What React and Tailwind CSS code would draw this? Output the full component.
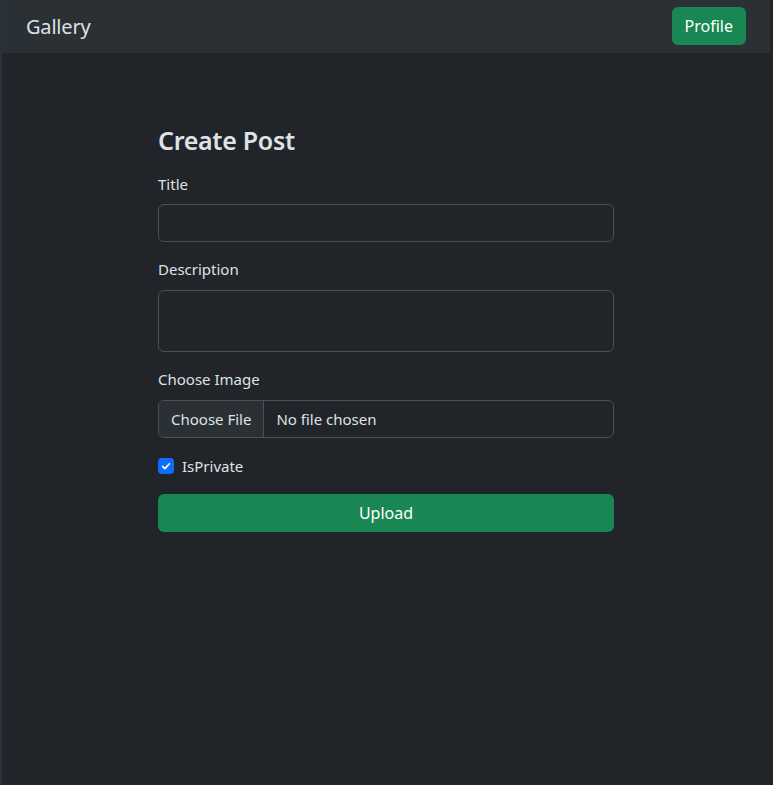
import React, { useState } from 'react';

const font = { fontFamily: '"Noto Sans", "Open Sans", sans-serif' };

const App = () => {
  const [isPrivate, setIsPrivate] = useState(true);

  return (
    <div
      className="min-h-[785px] bg-[#212529] text-[#dee2e6] border-l-2 border-[#2a3242]"
      style={font}
    >
      {/* Navbar */}
      <nav className="h-[53px] mr-[3px] bg-[#2b3035] flex items-center justify-between pl-[24px] pr-[24px]">
        <span className="text-[20px] leading-none tracking-[-0.2px]">Gallery</span>
        <button className="h-[38px] -mt-[1px] px-[13px] rounded-[6px] bg-[#198754] text-white text-[16px]">
          Profile
        </button>
      </nav>

      {/* Form */}
      <div className="w-[456px] mx-auto ml-[156px] pt-[72px]">
        <h3 className="text-[25px] font-semibold leading-[30px] mb-[17px] tracking-[-0.3px]">
          Create Post
        </h3>

        <label className="block text-[15px] leading-[24px] mb-[8px]">Title</label>
        <input
          type="text"
          className="block w-full h-[38px] rounded-[6px] border border-[#495057] bg-[#212529] px-3 outline-none"
        />

        <label className="block text-[15px] leading-[24px] mt-[15px] mb-[9px]">Description</label>
        <textarea className="block w-full h-[62px] rounded-[6px] border border-[#495057] bg-[#212529] px-3 py-1.5 outline-none resize-none" />

        <label className="block text-[15px] leading-[24px] mt-[15px] mb-[9px]">Choose Image</label>
        <div className="flex h-[38px] rounded-[6px] border border-[#495057] overflow-hidden text-[15px]">
          <div className="px-[12px] flex items-center bg-[#2b3035] border-r border-[#495057]">
            Choose File
          </div>
          <div className="px-[12px] flex items-center">No file chosen</div>
        </div>

        <label className="flex items-center gap-[8px] mt-[16px] leading-[24px] text-[15px] cursor-pointer">
          <span
            onClick={() => setIsPrivate(!isPrivate)}
            className={`w-[16px] h-[16px] rounded-[4px] flex items-center justify-center ${
              isPrivate ? 'bg-[#0d6efd]' : 'border border-[#495057]'
            }`}
          >
            {isPrivate && (
              <svg viewBox="0 0 16 16" className="w-[12px] h-[12px]">
                <path
                  d="M3.5 8.5l3 3 6-6.5"
                  fill="none"
                  stroke="#fff"
                  strokeWidth="2.2"
                  strokeLinecap="round"
                  strokeLinejoin="round"
                />
              </svg>
            )}
          </span>
          IsPrivate
        </label>

        <button className="mt-[16px] w-full h-[38px] rounded-[6px] bg-[#198754] text-white text-[16px]">
          Upload
        </button>
      </div>
    </div>
  );
};

export default App;
